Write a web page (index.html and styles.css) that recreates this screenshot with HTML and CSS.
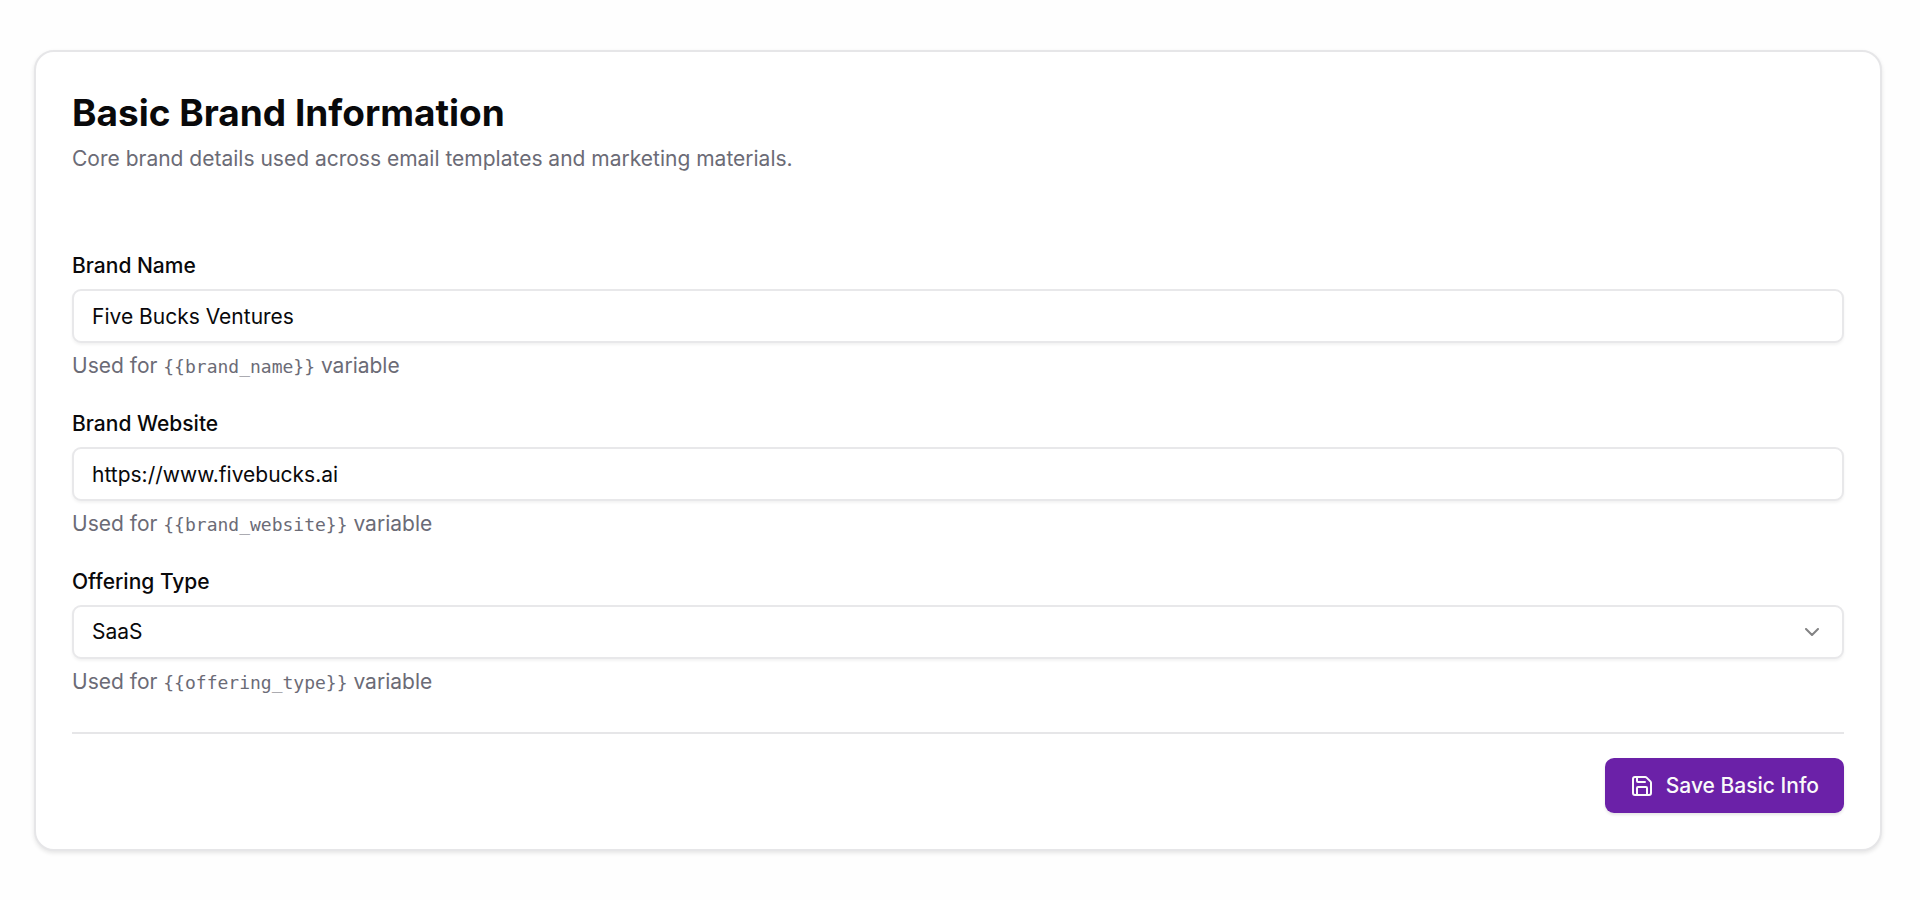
FILE: index.html
```html
<!DOCTYPE html>
<html lang="en">
<head>
    <meta charset="UTF-8">
    <title>Basic Brand Information</title>
    <link rel="stylesheet" href="styles.css">
</head>
<body>
    <form class="card">
        <div class="card-header">
            <h1>Basic Brand Information</h1>
            <p>Core brand details used across email templates and marketing materials.</p>
        </div>

        <div class="form-group">
            <label for="brand-name">Brand Name</label>
            <input type="text" id="brand-name" value="Five Bucks Ventures">
            <p class="hint">Used for <code>{{brand_name}}</code> variable</p>
        </div>

        <div class="form-group">
            <label for="brand-website">Brand Website</label>
            <input type="text" id="brand-website" value="https://www.fivebucks.ai">
            <p class="hint">Used for <code>{{brand_website}}</code> variable</p>
        </div>

        <div class="form-group">
            <label for="offering-type">Offering Type</label>
            <div class="select-wrap">
                <select id="offering-type">
                    <option selected>SaaS</option>
                    <option>Service</option>
                    <option>Product</option>
                </select>
                <svg class="chevron" viewBox="0 0 24 24" aria-hidden="true"><path d="m6 9 6 6 6-6"/></svg>
            </div>
            <p class="hint">Used for <code>{{offering_type}}</code> variable</p>
        </div>

        <div class="card-footer">
            <button type="button">
                <svg viewBox="0 0 24 24" aria-hidden="true">
                    <path d="M15.2 3a2 2 0 0 1 1.4.6l3.8 3.8a2 2 0 0 1 .6 1.4V19a2 2 0 0 1-2 2H5a2 2 0 0 1-2-2V5a2 2 0 0 1 2-2z"/>
                    <path d="M17 21v-7a1 1 0 0 0-1-1H8a1 1 0 0 0-1 1v7"/>
                    <path d="M7 3v4a1 1 0 0 0 1 1h7"/>
                </svg>
                Save Basic Info
            </button>
        </div>
    </form>
</body>
</html>
```

FILE: styles.css
```css
* {
    box-sizing: border-box;
}
body {
    margin: 0;
    padding: 50px 38px 50px 34px;
    background-color: #fefefe;
    color: #09090b;
    font-family: Inter, sans-serif;
    font-size: 21px;
    line-height: 32px;
}
.card {
    padding: 37px 36px 36px;
    background-color: white;
    border: 2px solid #e6e6e8;
    border-radius: 20px;
    box-shadow: 0 2px 4px rgba(0,0,0,0.1);
}
.card-header {
    margin-bottom: 75px;
}
h1 {
    margin: 0 0 6px;
    font-size: 37px;
    line-height: 48px;
    font-weight: 700;
}
p {
    margin: 0;
    color: #6b6b76;
}
.form-group {
    margin-bottom: 26px;
}
label {
    display: block;
    margin-bottom: 7px;
    font-weight: 500;
}
input, select {
    display: block;
    width: 100%;
    height: 54px;
    padding: 0 18px;
    background-color: white;
    border: 2px solid #e8e8ea;
    border-radius: 9px;
    box-shadow: 0 2px 3px rgba(0,0,0,0.05);
    color: inherit;
    font: inherit;
}
select {
    appearance: none;
}
.select-wrap {
    position: relative;
}
.chevron {
    position: absolute;
    right: 20px;
    top: 15px;
    width: 24px;
    height: 24px;
    pointer-events: none;
    opacity: 0.5;
}
svg {
    fill: none;
    stroke: currentColor;
    stroke-width: 2;
    stroke-linecap: round;
    stroke-linejoin: round;
}
.hint {
    margin-top: 7px;
}
code {
    font-family: "DejaVu Sans Mono", monospace;
    font-size: 18px;
    line-height: 1;
}
.card-footer {
    display: flex;
    justify-content: flex-end;
    margin-top: 34px;
    padding-top: 24px;
    border-top: 2px solid #e6e6e8;
}
button {
    display: flex;
    align-items: center;
    gap: 12px;
    height: 55px;
    padding: 0 25px;
    background-color: #6b21a8;
    border: none;
    border-radius: 9px;
    box-shadow: 0 2px 3px rgba(0,0,0,0.1);
    color: #fafafa;
    font: inherit;
    font-weight: 500;
    cursor: pointer;
}
button svg {
    width: 24px;
    height: 24px;
}
```
